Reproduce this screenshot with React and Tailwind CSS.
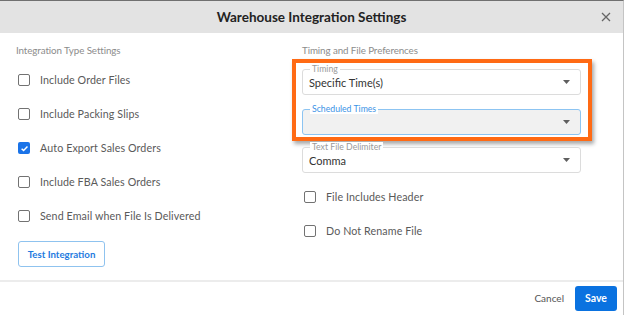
import React from 'react';

const FONT = { fontFamily: 'Lato, "Noto Sans", sans-serif' };

function Checkbox({ checked }) {
  if (checked) {
    return (
      <span className="w-[12px] h-[12px] rounded-[2px] bg-[#1a73e8] flex items-center justify-center shrink-0">
        <svg width="9" height="9" viewBox="0 0 10 10">
          <path d="M1.8 5.2 L4 7.3 L8.3 2.8" fill="none" stroke="white" strokeWidth="1.6" />
        </svg>
      </span>
    );
  }
  return <span className="w-[12px] h-[12px] rounded-[2px] border-[1.5px] border-[#727272] shrink-0" />;
}

function CheckRow({ label, checked }) {
  return (
    <div className="h-[34px] flex items-center gap-[10px] pl-[2px]">
      <Checkbox checked={checked} />
      <span className="text-[10.7px] text-[#5a5a5a] leading-none tracking-[0.1px]">{label}</span>
    </div>
  );
}

function Caret() {
  return (
    <svg width="7" height="4" viewBox="0 0 7 4" className="absolute right-[10px] top-1/2 -translate-y-1/2">
      <path d="M0 0 H7 L3.5 4 Z" fill="#5f5f5f" />
    </svg>
  );
}

function SelectField({ label, value, active }) {
  return (
    <div
      className={`relative h-[26px] rounded-[3px] border flex items-center pl-[6px] ${
        active ? 'border-[#8cc4f2] bg-[#f1f1f1]' : 'border-[#dcdcdc] bg-white'
      }`}
    >
      <span
        className={`absolute -top-[6px] left-[7px] px-[2px] bg-white text-[8.7px] leading-[10px] ${
          active ? 'text-[#3b93e6]' : 'text-[#9a9a9a]'
        }`}
      >
        {label}
      </span>
      <span className="text-[11px] text-[#333] leading-none">{value}</span>
      <Caret />
    </div>
  );
}

export default function App() {
  return (
    <div style={FONT} className="w-[624px] h-[315px] bg-white border-t border-[#707070] border-r border-r-[#c4c4c4] flex flex-col overflow-hidden">
      {/* HEADER */}
      <header className="h-[32px] bg-[#e3e3e3] flex items-center justify-center relative shrink-0">
        <h1 className="text-[13.5px] font-bold text-[#222]">Warehouse Integration Settings</h1>
        <svg width="10" height="10" viewBox="0 0 10 10" className="absolute right-[12px] top-[11px]">
          <path d="M1 1 L9 9 M9 1 L1 9" stroke="#666" strokeWidth="1.3" />
        </svg>
      </header>

      {/* BODY */}
      <div className="flex-1 flex pt-[11px] pl-[16px]">
        {/* LEFT */}
        <div className="w-[286px] flex flex-col">
          <p className="text-[9.8px] leading-[12px] text-[#8c8c8c] tracking-[-0.1px]">Integration Type Settings</p>
          <div className="mt-[7px] flex flex-col">
            <CheckRow label="Include Order Files" />
            <CheckRow label="Include Packing Slips" />
            <CheckRow label="Auto Export Sales Orders" checked />
            <CheckRow label="Include FBA Sales Orders" />
            <CheckRow label="Send Email when File Is Delivered" />
          </div>
          <button className="mt-[8px] ml-[2px] w-[87px] h-[26px] rounded-[3px] border border-[#8fc3ef] text-[9.7px] font-bold text-[#1f7be0] bg-white">
            Test Integration
          </button>
        </div>

        {/* RIGHT */}
        <div className="w-[279px] flex flex-col">
          <p className="text-[9.8px] leading-[12px] text-[#8c8c8c] tracking-[-0.1px]">Timing and File Preferences</p>
          <div className="relative mt-[13px] flex flex-col gap-[14px]">
            <SelectField label="Timing" value="Specific Time(s)" />
            <SelectField label="Scheduled Times" value="" active />
            {/* annotation highlight */}
            <div className="absolute -left-[10px] -right-[11px] -top-[10px] -bottom-[6px] border-[4px] border-[#ff6a14] shadow-[2px_3px_4px_rgba(0,0,0,0.35)] pointer-events-none" />
          </div>
          <div className="mt-[12px]">
            <SelectField label="Text File Delimiter" value="Comma" />
          </div>
          <div className="mt-[7px] flex flex-col">
            <CheckRow label="File Includes Header" />
            <CheckRow label="Do Not Rename File" />
          </div>
        </div>
      </div>

      {/* FOOTER */}
      <footer className="h-[35px] border-t-2 border-[#ececec] flex items-center justify-end gap-[11px] pr-[6px] shrink-0">
        <span className="text-[10px] text-[#555]">Cancel</span>
        <button className="w-[42px] h-[25px] rounded-[3px] bg-[#0a72e0] text-white text-[10.5px] font-bold">Save</button>
      </footer>
    </div>
  );
}
